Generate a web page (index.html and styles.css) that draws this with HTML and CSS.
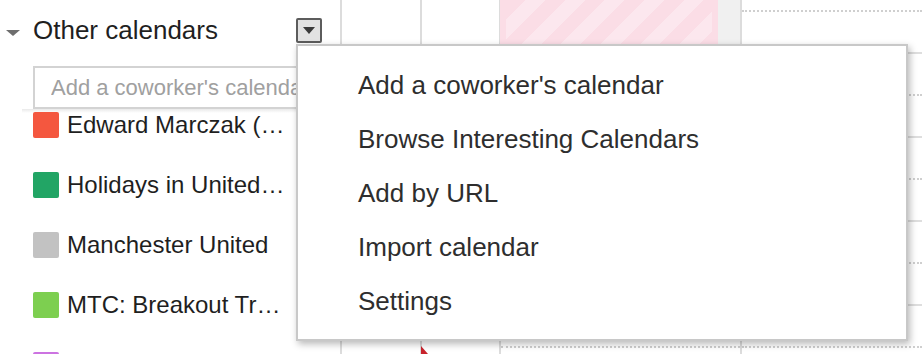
FILE: index.html
```html
<!DOCTYPE html>
<html lang="en">

<head>
    <meta charset="UTF-8">
    <meta name="viewport" content="width=device-width, initial-scale=1.0">
    <title>Calendar</title>
    <link rel="stylesheet" href="styles.css">
</head>

<body>
    <div class="page">
        <aside class="sidebar">
            <div class="section-head">
                <span class="toggle">
                    <svg width="14" height="6" viewBox="0 0 14 6"><path d="M0 0H14L7 6Z" fill="#6e6e6e"/></svg>
                </span>
                <span class="section-title">Other calendars</span>
                <span class="menu-btn">
                    <svg width="12" height="7" viewBox="0 0 12 7"><path d="M0 0H12L6 7Z" fill="#3a3a3a"/></svg>
                </span>
            </div>
            <input class="add-input" type="text" placeholder="Add a coworker's calendar">
            <ul class="cal-list">
                <li><span class="swatch red"></span><span class="cal-name">Edward Marczak (emarczak)</span></li>
                <li><span class="swatch green"></span><span class="cal-name">Holidays in United States</span></li>
                <li><span class="swatch grey"></span><span class="cal-name">Manchester United</span></li>
                <li><span class="swatch lime"></span><span class="cal-name">MTC: Breakout Track</span></li>
                <li><span class="swatch purple"></span><span class="cal-name">Team calendar</span></li>
            </ul>
        </aside>

        <div class="gutter"></div>
        <div class="gutter second">
            <span class="now-mark"></span>
        </div>

        <div class="day">
            <div class="slot-lead"></div>
            <div class="slot"></div>
            <div class="slot hour"></div>
            <div class="slot"></div>
            <div class="slot hour"></div>
            <div class="slot"></div>
            <div class="slot hour"></div>
            <div class="slot"></div>
            <div class="slot hour"></div>
            <div class="slot"></div>
            <div class="event"><div class="event-stripes"></div></div>
            <div class="busy"></div>
        </div>

        <div class="day last">
            <div class="slot-lead"></div>
            <div class="slot"></div>
            <div class="slot hour"></div>
            <div class="slot"></div>
            <div class="slot hour"></div>
            <div class="slot"></div>
            <div class="slot hour"></div>
            <div class="slot"></div>
            <div class="slot hour"></div>
            <div class="slot"></div>
        </div>
    </div>

    <!-- calendar options menu -->
    <ul class="dropdown">
        <li>Add a coworker's calendar</li>
        <li>Browse Interesting Calendars</li>
        <li>Add by URL</li>
        <li>Import calendar</li>
        <li>Settings</li>
    </ul>
</body>

</html>
```

FILE: styles.css
```css
* {
    margin: 0;
    padding: 0;
    box-sizing: border-box;
}

body {
    position: relative;
    width: 922px;
    height: 354px;
    overflow: hidden;
    background: #fff;
    font-family: "Liberation Sans", Arial, sans-serif;
}

.page {
    display: flex;
    height: 354px;
    overflow: hidden;
}

/* sidebar */
.sidebar {
    flex: none;
    width: 342px;
    height: 354px;
    overflow: hidden;
    border-right: 2px solid #dcdcdc;
}

.section-head {
    display: flex;
    align-items: center;
    height: 30px;
    margin-top: 15px;
    padding: 0 18px 0 6px;
}

.toggle {
    display: flex;
    width: 14px;
    margin: 6px 13px 0 0;
}

.section-title {
    font-size: 26px;
    line-height: 30px;
    color: #1f1f1f;
}

.menu-btn {
    display: flex;
    align-items: center;
    justify-content: center;
    margin-left: auto;
    width: 26px;
    height: 25px;
    border: 2px solid #5c5c5c;
    border-radius: 2px;
    background: #e2e2e2;
}

.add-input {
    display: block;
    margin: 21px 0 0 33px;
    width: 290px;
    height: 43px;
    padding: 0 16px;
    border: 2px solid #d3d3d3;
    font-family: "Liberation Sans", Arial, sans-serif;
    font-size: 22px;
    color: #222;
    outline: none;
}

.add-input::placeholder {
    color: #a0a0a0;
}

.cal-list {
    list-style: none;
    margin-left: 22px;
    padding: 3px 0 0 11px;
    background: linear-gradient(#e9e9e9, rgba(255, 255, 255, 0) 4px) no-repeat;
}

.cal-list li {
    display: flex;
    align-items: center;
    height: 26px;
    margin-bottom: 34px;
}

.swatch {
    flex: none;
    width: 26px;
    height: 26px;
    margin-right: 8px;
    border-radius: 2px;
}

.red { background: #f4573f; }
.green { background: #22a565; }
.grey { background: #c2c2c2; }
.lime { background: #7dcf50; }
.purple { background: #cc73e1; }

.cal-name {
    width: 220px;
    font-size: 24px;
    line-height: 26px;
    color: #1f1f1f;
    white-space: nowrap;
    overflow: hidden;
    text-overflow: ellipsis;
}

/* grid */
.gutter {
    position: relative;
    flex: none;
    width: 80px;
    border-right: 2px solid #dcdcdc;
}

.gutter.second {
    width: 79px;
}

.now-mark {
    position: absolute;
    left: -1px;
    bottom: 0;
    width: 0;
    height: 0;
    border-bottom: 8px solid #c8232c;
    border-right: 7px solid transparent;
}

.day {
    position: relative;
    flex: none;
    width: 241px;
    border-right: 2px solid #dcdcdc;
}

.day.last {
    flex: 1;
    border-right: none;
}

.slot-lead {
    height: 10px;
}

.slot {
    height: 42px;
    border-top: 2px dotted #cfcfcf;
}

.slot.hour {
    border-top: 2px solid #dedede;
}

.event {
    position: absolute;
    top: 0;
    left: -1px;
    width: 218px;
    height: 60px;
    padding: 0 6px;
    background: #fbdde6;
}

.event-stripes {
    height: 100%;
    background: repeating-linear-gradient(135deg, #fbdde6 0 14px, #fce7ee 14px 28px);
}

.busy {
    position: absolute;
    top: 0;
    right: 0;
    width: 22px;
    height: 60px;
    background: #f0f0f0;
}

/* dropdown menu */
.dropdown {
    position: absolute;
    top: 44px;
    left: 296px;
    width: 612px;
    height: 297px;
    padding: 12px 0 11px;
    list-style: none;
    background: #fff;
    border: 2px solid #c8c8c8;
    box-shadow: 2px 3px 7px rgba(0, 0, 0, .28);
}

.dropdown li {
    padding-left: 60px;
    font-size: 26px;
    line-height: 54px;
    color: #2e2e2e;
}
```
